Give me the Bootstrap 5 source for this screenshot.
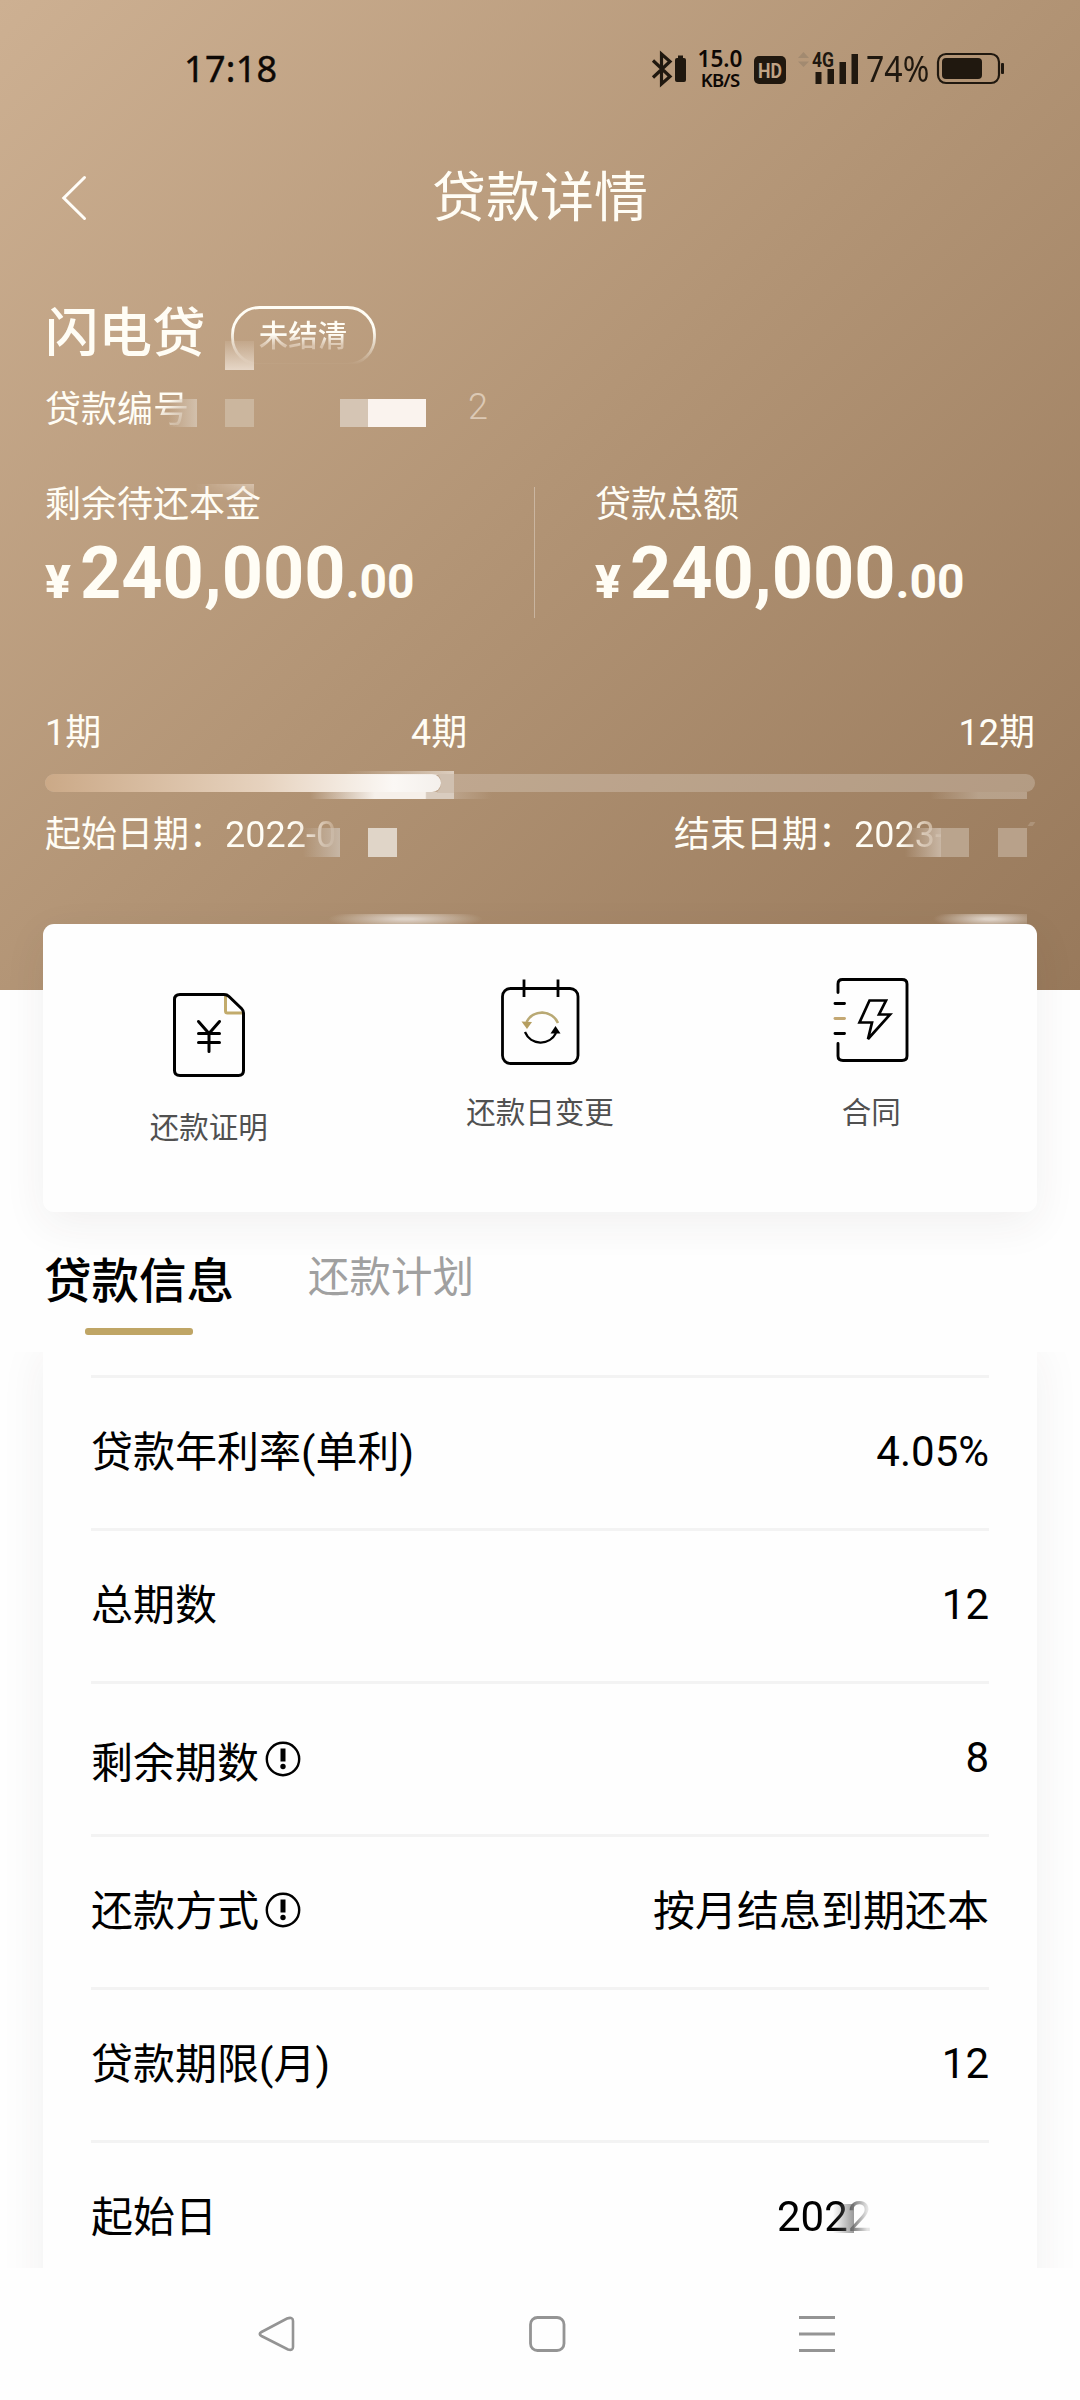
<!DOCTYPE html>
<html lang="zh-CN">
<head>
<meta charset="utf-8">
<meta name="viewport" content="width=device-width, initial-scale=1">
<title>贷款详情</title>
<link rel="stylesheet" href="https://cdn.jsdelivr.net/npm/bootstrap@5.3.0/dist/css/bootstrap.min.css">
<style>
body{font-family:Roboto,"Noto Sans CJK SC",sans-serif;color:#000;background:#fefefe;width:1080px;height:2400px;overflow:hidden}
svg{display:block;flex:none;overflow:visible}
.hero{height:990px;color:#fffdf5;background:linear-gradient(135deg,#cdb092 0%,#b29475 50%,#98795b 100%)}
.status{height:137px;color:#0d0805;font-family:"Noto Sans",sans-serif;padding-left:184px;padding-right:75px}
.clock{font-size:36px;font-weight:400;line-height:40px;letter-spacing:.3px;-webkit-text-stroke:.4px #0d0805}
.speed{width:46px;line-height:22px;text-align:center;font-weight:600;font-size:22.5px;margin-left:9px}
.speed .unit{font-size:18.5px;line-height:19px;letter-spacing:-.8px}
.pct{font-size:36px;line-height:40px;color:#20180f;width:62px;white-space:nowrap}
.pct span{display:inline-block;transform:scaleX(.89);transform-origin:0 50%}
.titlebar{height:118px;padding:4px 62px 0}
.titlebar h1{font-size:54px;line-height:64px;font-weight:400;padding-top:2px}
.inner-x{padding:0 45px}
.product{margin-top:46px;height:64px}
.product h2{font-size:53.5px;line-height:60px;font-weight:500;padding-top:2px}
.state{width:145px;height:60px;margin-left:25px;margin-top:6px}
.state span{font-size:29.5px;font-weight:500;line-height:60px;background:linear-gradient(#fffdf5 45%,#d9c4ae 78%);-webkit-background-clip:text;background-clip:text;color:transparent}
.t36{font-size:36px;line-height:50px}
.sums{margin-top:45px;height:141px}
.sums .left-sum{width:490px;background:linear-gradient(rgba(255,255,255,.32),rgba(255,255,255,.32)) no-repeat 489px 7px/1px 131px}
.sums .right-sum{padding-left:60px}
.money{font-weight:700;font-size:72px;line-height:84px;margin-top:2px}
.money small{font-size:48px;font-weight:700}
.money .yen{font-size:46px;width:35px;white-space:nowrap}
.money .yen b{display:inline-block;transform:scaleX(1.04);transform-origin:0 50%}
.terms{margin-top:87px;height:50px}
.track{height:18px;margin-top:16px;border-radius:9px;background:rgba(255,255,255,.22)}
.track .progress-bar{border-radius:9px;background:linear-gradient(90deg,#cba987,#e6d2be 55%,#fbf8f5 88%,#f4f0ec)}
.dates{margin-top:18px}
.fade-l{-webkit-background-clip:text;background-clip:text;color:transparent}
.d1{background-image:linear-gradient(90deg,#fffdf5 60%,#ecdfd0 78%,#bea387 100%)}
.d2{background-image:linear-gradient(90deg,#fffdf5 50%,#e2d2c0 72%,#b29679 100%)}
.mz{position:absolute}
.actions{margin:-66px 43px 0;height:288px;border:0;border-radius:11px;background:#fefefe;box-shadow:0 12px 44px rgba(60,50,40,.065)}
.act{padding-top:52px;color:#505050;font-size:29.5px;line-height:40px}
.act svg{margin-bottom:27px}
.act-low{padding-top:66px}
.act-low svg{margin-bottom:28px}
.tabs{margin-top:43px;height:97px;background:#fefefe;position:relative;padding-left:43px}
.tab-on{font-size:47.5px;font-weight:500;line-height:54px;width:192px}
.tab-on i{width:108px;height:7px;border-radius:3px;background:#bfa565;margin-top:19px}
.tab-off{font-size:41.5px;line-height:46px;color:#a0a0a0;margin-left:73px}
.pane{height:916px;overflow:hidden}
.info{margin:0 43px;height:1000px;padding:23px 48px 0;background:#fefefe;box-shadow:0 0 44px rgba(60,50,40,.065)}
.info .item{height:153px;border-top:3px solid #f3f3f3;font-size:42px;line-height:60px;padding-bottom:2px}
.cjk-line{padding-top:2px}
.tip{margin-left:6px}
.softkeys{height:132px;background:#fefefe;position:relative}
.lastyear{width:212px}
.lastyear span{background:linear-gradient(90deg,#000 72%,#777 80%,#e4e4e4 96%);-webkit-background-clip:text;background-clip:text;color:transparent}
</style>
</head>
<body>
<div class="hero position-relative">
  <div class="status d-flex align-items-center">
    <span class="clock">17:18</span>
    <div class="d-flex align-items-center ms-auto">
      <svg width="36" height="34" viewBox="651 52 36 34"><path d="M652 60.500L669 76.500L660.500 84V54L669 61.500L652 77.500" fill="none" stroke="#20180f" stroke-width="3.200"/><rect x="674" y="58" width="11" height="24" rx="2" fill="#20180f"/><rect x="677" y="55.500" width="5" height="4" fill="#20180f"/></svg>
      <div class="speed">15.0<div class="unit">KB/S</div></div>
      <svg width="112" height="38" viewBox="754 50 112 38" style="margin-left:11px">
        <rect x="754" y="56" width="32" height="28" rx="5" fill="#20180f"/>
        <text x="770" y="77.500" text-anchor="middle" font-family="Roboto" font-weight="700" font-size="21" fill="#c0a384" textLength="24" lengthAdjust="spacingAndGlyphs">HD</text>
        <path d="M798 58L803.500 52L809 58zM798 61.500H809L803.500 67z" fill="#a28a70"/>
        <text x="812" y="67" font-family="Roboto" font-weight="700" font-size="20" fill="#20180f" textLength="22" lengthAdjust="spacingAndGlyphs">4G</text>
        <path d="M815.500 72h6v12h-6zM827.500 69h6.500v15h-6.500zM839.500 62h6.500v22h-6.500zM851.500 54h6.500v30h-6.500z" fill="#20180f"/>
      </svg>
      <span class="pct"><span>74%</span></span>
      <svg width="69" height="34" viewBox="936 52 69 34" style="margin-left:8px"><rect x="938" y="54" width="61" height="29" rx="8" fill="none" stroke="#20180f" stroke-width="2.200"/><rect x="942" y="58" width="40" height="21" rx="4" fill="#20180f"/><rect x="1001" y="63" width="3" height="11" rx="1" fill="#20180f"/></svg>
    </div>
  </div>
  <div class="titlebar d-flex align-items-center">
    <svg width="24" height="44" viewBox="0 0 24 44"><path d="M22.500 1.500L1.800 22L22.500 42.500" fill="none" stroke="#fffdf8" stroke-width="3" stroke-linecap="round"/></svg>
    <h1 class="m-0 flex-fill text-center pe-4">贷款详情</h1>
  </div>
  <div class="inner-x">
    <div class="product d-flex align-items-center">
      <h2 class="m-0">闪电贷</h2>
      <div class="state position-relative text-center">
        <svg class="position-absolute top-0 start-0" width="145" height="60" viewBox="0 0 145 60"><defs><linearGradient id="rim" x1="0" y1="0" x2="0" y2="1"><stop offset=".4" stop-color="#fffdf5"/><stop offset="1" stop-color="#fffdf5" stop-opacity="0"/></linearGradient></defs><rect x="1.500" y="1.500" width="142" height="57" rx="27" fill="none" stroke="url(#rim)" stroke-width="2.800"/></svg>
        <span class="position-relative">未结清</span>
      </div>
    </div>
    <div class="t36" style="margin-top:20px">贷款编<span class="fade-l" style="background-image:linear-gradient(150deg,#fffdf5 35%,#cdb79f 80%)">号</span></div>
    <div class="sums d-flex">
      <div class="left-sum">
        <div class="t36">剩余待还本金</div>
        <div class="money d-flex align-items-baseline"><span class="yen"><b>¥</b></span>240,000<small>.00</small></div>
      </div>
      <div class="right-sum">
        <div class="t36">贷款总额</div>
        <div class="money d-flex align-items-baseline"><span class="yen"><b>¥</b></span>240,000<small>.00</small></div>
      </div>
    </div>
    <div class="terms t36 d-flex justify-content-between position-relative">
      <span>1期</span><span class="position-absolute" style="left:366px">4期</span><span>12期</span>
    </div>
    <div class="progress track"><div class="progress-bar" style="width:40%"></div></div>
    <div class="dates t36 d-flex justify-content-between">
      <span>起始日期：<span class="fade-l d1">2022-0</span></span>
      <span style="width:361px">结束日期：<span class="fade-l d2">2023-</span></span>
    </div>
  </div>
  <!-- privacy mosaic over account number and dates -->
  <i class="mz" style="left:225px;top:341px;width:29px;height:29px;background:linear-gradient(rgba(240,228,216,.1),rgba(240,228,216,.8))"></i>
  <i class="mz" style="left:168px;top:399px;width:29px;height:28px;background:linear-gradient(90deg,rgba(214,198,180,0),rgba(214,198,180,.85))"></i>
  <i class="mz" style="left:225px;top:399px;width:29px;height:28px;background:#cbb69e"></i>
  <i class="mz" style="left:340px;top:399px;width:28px;height:28px;background:#d5c5b4"></i>
  <i class="mz" style="left:368px;top:399px;width:58px;height:28px;background:#faf3ee"></i>
  <span class="mz" style="left:468px;top:387px;font-size:36px;line-height:40px;font-weight:300;color:#dcc9b5">2</span>
  <i class="mz" style="left:195px;top:484px;width:59px;height:18px;background:linear-gradient(90deg,rgba(235,220,205,0),rgba(235,220,205,.6));-webkit-mask:linear-gradient(#000,transparent)"></i>
  <i class="mz" style="left:310px;top:792px;width:144px;height:7px;background:linear-gradient(90deg,rgba(246,240,234,0),#f6f0ea 45%,#f6f0ea 80%,#d9ccbf 81%)"></i>
  <i class="mz" style="left:345px;top:771px;width:109px;height:4px;background:linear-gradient(90deg,rgba(240,232,224,0),rgba(240,232,224,.7))"></i>
  <i class="mz" style="left:437px;top:774px;width:17px;height:19px;background:#d0c0b0;clip-path:path('M0 0H17V19H0V18Q4 15 4 9Q4 3 0 0z')"></i>
  <i class="mz" style="left:454px;top:792px;width:38px;height:7px;background:linear-gradient(90deg,rgba(215,200,185,.35),rgba(215,200,185,0))"></i>
  <i class="mz" style="left:303px;top:828px;width:37px;height:29px;background:linear-gradient(90deg,rgba(205,192,178,0),rgba(205,192,178,.8))"></i>
  <i class="mz" style="left:368px;top:828px;width:29px;height:29px;background:#e0d5c8"></i>
  <i class="mz" style="left:930px;top:792px;width:97px;height:7px;background:linear-gradient(90deg,rgba(200,183,165,0),rgba(200,183,165,.6) 50%)"></i>
  <i class="mz" style="left:905px;top:828px;width:36px;height:29px;background:linear-gradient(90deg,rgba(214,200,186,0),rgba(214,200,186,.75))"></i>
  <i class="mz" style="left:941px;top:828px;width:28px;height:29px;background:#baa48d"></i>
  <i class="mz" style="left:998px;top:828px;width:29px;height:29px;background:#b8a18a"></i>
  <i class="mz" style="left:1029px;top:822px;width:5px;height:4px;background:#ad9379;transform:skewX(-35deg)"></i>
  <i class="mz" style="left:328px;top:914px;width:155px;height:10px;background:radial-gradient(ellipse 50% 100% at 50% 50%,#e0d4c8 10%,rgba(230,220,210,0))"></i>
  <i class="mz" style="left:933px;top:914px;width:94px;height:10px;background:radial-gradient(ellipse 60% 100% at 60% 50%,#e0d4c8 10%,rgba(230,220,210,0))"></i>
</div>

<div class="card actions position-relative">
  <div class="row g-0 text-center">
    <div class="col act act-low d-flex flex-column align-items-center">
      <svg width="90" height="90" viewBox="164 990 90 90" fill="none" stroke="#000" stroke-width="3" stroke-linejoin="round" stroke-linecap="round"><path d="M225.500 995V1011Q225.500 1013 227.500 1013H242" stroke="#c2ab6c"/><path d="M180 994.500H224Q227 994.500 229 996.500L241.500 1008.500Q243.500 1010.500 243.500 1013V1070.500Q243.500 1075.500 238.500 1075.500H180Q174.500 1075.500 174.500 1070.500V999.500Q174.500 994.500 180 994.500z"/><path d="M198.500 1021.500L209 1033.500L219.500 1021.500M198.500 1033.500H219.500M198.500 1042.500H219.500M209 1033.500V1051.500"/></svg>
      <span>还款证明</span>
    </div>
    <div class="col act d-flex flex-column align-items-center">
      <svg width="90" height="90" viewBox="495 976 90 90" fill="none" stroke="#000" stroke-width="2.800"><rect x="502.500" y="988.500" width="75.500" height="75" rx="8"/><path d="M524 979.500V997M558 979.500V997"/><path d="M525 1032A17 17 0 0 0 556 1033" stroke-width="2.300"/><path d="M558 1023A17.500 17.500 0 0 0 526.500 1022" stroke="#b9a974" stroke-width="2.600"/><path d="M521.500 1021.500L532 1022L527 1029z" fill="#b59e60" stroke="none"/><path d="M550.500 1033.500H560.500L555.500 1026z" fill="#000" stroke="none"/></svg>
      <span>还款日变更</span>
    </div>
    <div class="col act d-flex flex-column align-items-center">
      <svg width="90" height="90" viewBox="826 976 90 90" fill="none" stroke="#000" stroke-width="2.900" stroke-linejoin="round" stroke-linecap="round"><path d="M838 992.500V984Q838 979.500 842.500 979.500H902Q907 979.500 907 984V1056Q907 1060.500 902 1060.500H843Q838 1060.500 838 1056V1043.500M835 1003.500H844.500M835 1033.500H844.500"/><path d="M835 1018.500H844.500" stroke="#c4a873"/><path d="M869.500 1000.500H886L879 1014.500H890L868 1039L872 1022.500H859.500z" stroke-linejoin="miter" stroke-width="2.700"/></svg>
      <span>合同</span>
    </div>
  </div>
</div>

<div class="tabs d-flex">
  <div class="tab-on d-flex flex-column align-items-center text-nowrap">贷款信息<i></i></div>
  <div class="tab-off">还款计划</div>
</div>

<div class="pane">
  <div class="info">
    <div class="item d-flex align-items-center justify-content-between"><span class="cjk-line">贷款年利率(单利)</span><span>4.05%</span></div>
    <div class="item d-flex align-items-center justify-content-between"><span class="cjk-line">总期数</span><span>12</span></div>
    <div class="item d-flex align-items-center justify-content-between"><span class="d-flex align-items-center"><span class="pt-2 mt-1">剩余期数</span><svg class="tip" width="36" height="36" viewBox="0 0 36 36" style="margin-top:2px"><circle cx="18" cy="18" r="16.200" fill="none" stroke="#000" stroke-width="2.400"/><path d="M15.500 7.500h5v13h-5z"/><circle cx="18" cy="25.500" r="2.700"/></svg></span><span>8</span></div>
    <div class="item d-flex align-items-center justify-content-between"><span class="cjk-line d-flex align-items-center">还款方式<svg class="tip" width="36" height="36" viewBox="0 0 36 36" style="margin-top:-5px"><circle cx="18" cy="18" r="16.200" fill="none" stroke="#000" stroke-width="2.400"/><path d="M15.500 7.500h5v13h-5z"/><circle cx="18" cy="25.500" r="2.700"/></svg></span><span class="cjk-line">按月结息到期还本</span></div>
    <div class="item d-flex align-items-center justify-content-between"><span class="cjk-line">贷款期限(月)</span><span>12</span></div>
    <div class="item d-flex align-items-center justify-content-between"><span class="cjk-line">起始日</span><span class="lastyear position-relative"><span>2022</span><i class="mz" style="left:56px;top:17px;width:21px;height:29px;background:linear-gradient(90deg,rgba(120,120,120,0),rgba(110,110,110,.7))"></i></span></div>
  </div>
</div>

<div class="softkeys">
  <div class="d-flex align-items-center h-100" style="padding-left:258px">
    <svg width="38" height="38" viewBox="0 0 38 38"><path d="M3.500 17L29 3.500Q35 1.500 35 6V32Q35 36 30 34.500L3.500 21Q0 19 3.500 17z" fill="none" stroke="#949494" stroke-width="2.600"/></svg>
    <svg width="38" height="38" viewBox="0 0 38 38" style="margin-left:232px"><rect x="2.500" y="2.500" width="33.500" height="33" rx="7" fill="none" stroke="#949494" stroke-width="2.800"/></svg>
    <svg width="38" height="38" viewBox="0 0 38 38" style="margin-left:232px"><path d="M1 2.500H37M1 19H37M1 35.500H37" stroke="#949494" stroke-width="3"/></svg>
  </div>
</div>
<script src="https://cdn.jsdelivr.net/npm/bootstrap@5.3.0/dist/js/bootstrap.bundle.min.js"></script>
</body>
</html>
